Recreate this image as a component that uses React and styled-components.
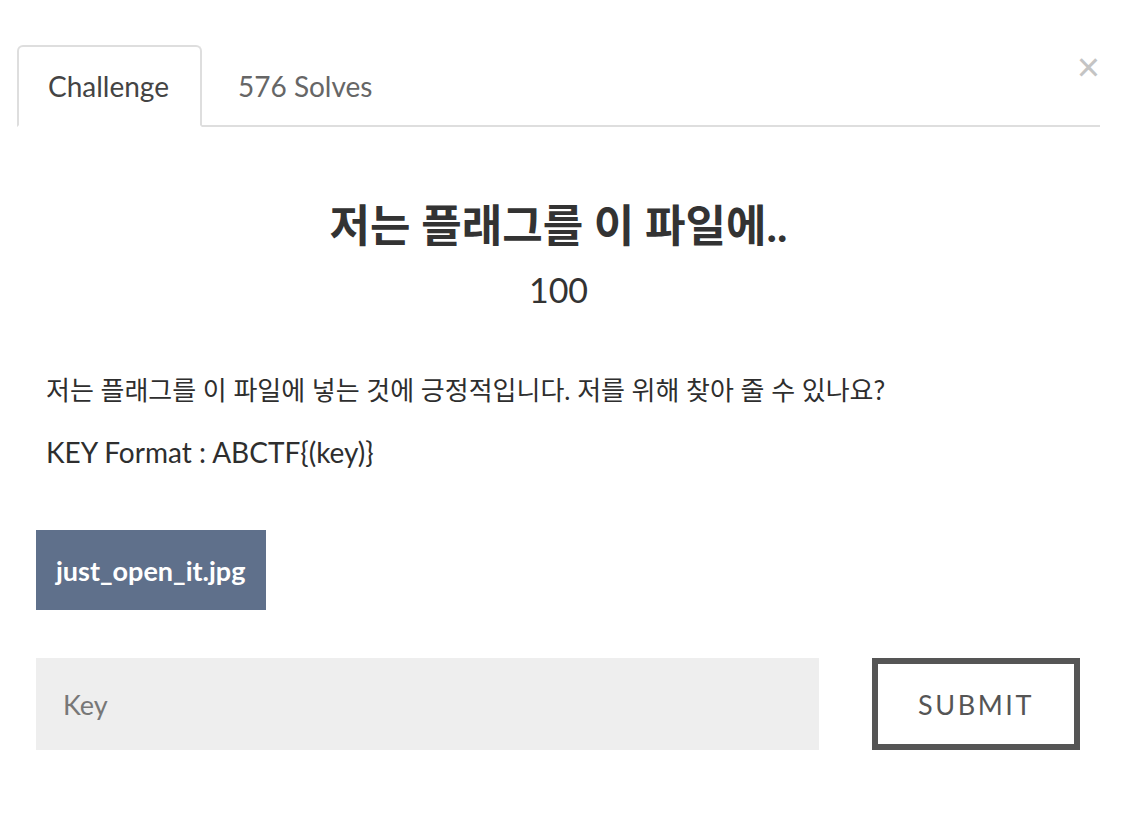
import React from "react";
import styled, { createGlobalStyle } from "styled-components";

const GlobalStyle = createGlobalStyle`
  html, body {
    margin: 0;
    padding: 0;
    background: #fff;
  }
  body {
    font-family: Lato, "Noto Sans CJK KR", "Noto Sans", sans-serif;
    color: #333;
  }
`;

const Modal = styled.div`
  position: relative;
  width: 1124px;
  height: 822px;
  box-sizing: border-box;
  padding: 45px 24px 0 17px;
`;

const CloseButton = styled.button`
  position: absolute;
  top: 47px;
  right: 24px;
  border: 0;
  background: none;
  padding: 0;
  font-family: "Liberation Sans", Arial, sans-serif;
  font-size: 40px;
  line-height: 1;
  color: #c4c4c4;
  cursor: pointer;
`;

const TabBar = styled.nav`
  display: flex;
  gap: 5px;
  border-bottom: 2px solid #dedede;
`;

const Tab = styled.a`
  display: flex;
  align-items: center;
  box-sizing: border-box;
  height: 82px;
  padding: 0 31px 0 29px;
  margin-bottom: -2px;
  font-size: 28px;
  color: ${(p) => (p.$active ? "#444" : "#666")};
  border: 2px solid ${(p) => (p.$active ? "#dedede" : "transparent")};
  border-bottom-color: ${(p) => (p.$active ? "#fff" : "transparent")};
  border-radius: 6px 6px 0 0;
  background: ${(p) => (p.$active ? "#fff" : "transparent")};
  text-decoration: none;
  cursor: pointer;
`;

const Heading = styled.div`
  text-align: center;
  padding-top: 73px;
`;

const Title = styled.h3`
  margin: 0;
  font-size: 44px;
  font-weight: 700;
  line-height: 50px;
  color: #333;
`;

const Points = styled.h4`
  margin: 20px 0 0;
  font-size: 34px;
  font-weight: 400;
  line-height: 40px;
  color: #333;
`;

const Description = styled.div`
  margin-top: 62px;
  padding-left: 29px;
`;

const Para = styled.p`
  margin: 0 0 26px;
  font-size: ${(p) => p.$size || 28}px;
  line-height: 36px;
  color: #2e2e2e;
`;

const Files = styled.div`
  margin-top: 60px;
  padding-left: 19px;
  display: flex;
`;

const FileButton = styled.a`
  display: flex;
  align-items: center;
  height: 80px;
  padding: 0 21px 0 20px;
  background: #5f708b;
  color: #fff;
  font-size: 27px;
  font-weight: 700;
  text-decoration: none;
  cursor: pointer;
`;

const FormRow = styled.form`
  display: flex;
  margin: 48px 0 0;
  gap: 53px;
  padding-left: 19px;
`;

const KeyInput = styled.input`
  box-sizing: border-box;
  width: 783px;
  height: 92px;
  border: 0;
  outline: none;
  background: #eee;
  padding: 0 27px;
  font-family: Lato, sans-serif;
  font-size: 27px;
  color: #333;
  &::placeholder {
    color: #777;
  }
`;

const SubmitButton = styled.button`
  box-sizing: border-box;
  width: 208px;
  height: 92px;
  border: 6px solid #555;
  background: #fff;
  font-family: Lato, sans-serif;
  font-size: 27px;
  letter-spacing: 2.6px;
  color: #555;
  cursor: pointer;
`;

export default function App() {
  return (
    <>
      <GlobalStyle />
      <Modal>
        <CloseButton aria-label="Close">×</CloseButton>
        <TabBar>
          <Tab $active>Challenge</Tab>
          <Tab>576 Solves</Tab>
        </TabBar>
        <Heading>
          <Title>저는 플래그를 이 파일에..</Title>
          <Points>100</Points>
        </Heading>
        <Description>
          <Para $size={26}>
            저는 플래그를 이 파일에 넣는 것에 긍정적입니다. 저를 위해 찾아 줄 수 있나요?
          </Para>
          <Para>KEY Format : ABCTF{"{(key)}"}</Para>
        </Description>
        <Files>
          <FileButton>just_open_it.jpg</FileButton>
        </Files>
        <FormRow onSubmit={(e) => e.preventDefault()}>
          <KeyInput placeholder="Key" />
          <SubmitButton type="submit">SUBMIT</SubmitButton>
        </FormRow>
      </Modal>
    </>
  );
}
